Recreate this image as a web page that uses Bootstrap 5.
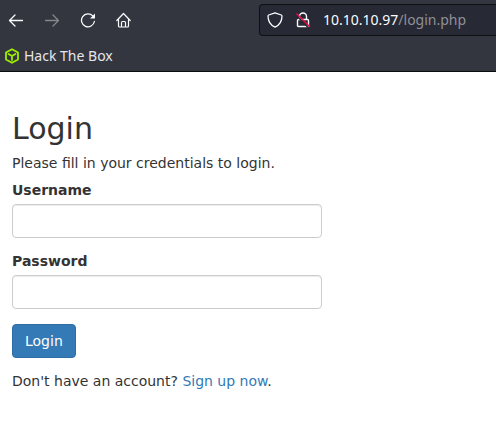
<!DOCTYPE html>
<html lang="en">
<head>
<meta charset="utf-8">
<meta name="viewport" content="width=device-width, initial-scale=1">
<title>Login</title>
<link href="https://cdn.jsdelivr.net/npm/bootstrap@5.3.0/dist/css/bootstrap.min.css" rel="stylesheet">
<style>
  body { font-family: "DejaVu Sans", sans-serif; font-size: 14px; line-height: 20px; color: #333; }
  .browser-bar { background: #33363f; border-bottom: 1px solid #0c0c0d; font-family: "Noto Sans", sans-serif; color: #fbfbfe; }
  .toolbar { display: grid; grid-template-columns: 259px 1fr; height: 40px; }
  .nav-tools { gap: 20px; padding-left: 8px; }
  .tool { width: 16px; height: 16px; color: #fbfbfe; line-height: 0; }
  .tool:disabled { color: #84868b; }
  .address { height: 32px; gap: 12px; padding-left: 7px; background: #272934; border: 1px solid #0f1014; border-right: 0; border-radius: 4px 0 0 4px; font-size: 14px; }
  .address-path { color: #909097; }
  .bookmarks { height: 31px; padding-left: 4px; }
  .bookmark { gap: 4px; font-size: 14px; color: #e6e6ea; }
  svg { display: block; flex: none; fill: none; stroke: currentColor; }
  .brand-cube { color: #9fef00; }
  .login-panel { max-width: 334px; padding: 40px 12px; }
  .login-title { font-size: 30px; line-height: 33px; font-weight: 400; margin-bottom: 8px; }
  .login-intro { margin-bottom: 7px; }
  .login-panel .form-label { font-weight: 700; margin-bottom: 4px; display: block; }
  .field { margin-bottom: 13px; }
  .login-panel .form-control { height: 34px; border-color: #ccc; border-radius: 4px; font-size: 14px; box-shadow: inset 0 1px 1px rgba(0,0,0,.075); }
  .login-panel .btn { --bs-btn-bg: #337ab7; --bs-btn-border-color: #2e6da4; --bs-btn-hover-bg: #286090; --bs-btn-padding-x: 12px; --bs-btn-padding-y: 6px; --bs-btn-font-size: 14px; --bs-btn-line-height: 20px; --bs-btn-border-radius: 4px; }
  .login-actions { margin: 15px 0 13px; }
  .login-panel a { color: #337ab7; }
</style>
<script src="https://cdn.jsdelivr.net/npm/bootstrap@5.3.0/dist/js/bootstrap.bundle.min.js" defer></script>
</head>
<body>
<header class="browser-bar">
  <div class="toolbar align-items-center">
    <div class="nav-tools d-flex align-items-center">
      <button class="tool border-0 bg-transparent p-0" type="button" aria-label="Back"><svg width="16" height="16" viewBox="0 0 16 16" stroke-width="1.3" stroke-linecap="round" stroke-linejoin="round"><path d="M14.500 8.500h-13M7 3 1.500 8.500 7 14"/></svg></button>
      <button class="tool border-0 bg-transparent p-0" type="button" aria-label="Forward" disabled><svg width="16" height="16" viewBox="0 0 16 16" stroke-width="1.3" stroke-linecap="round" stroke-linejoin="round"><path d="M1.500 8.500h13M9 3l5.500 5.500L9 14"/></svg></button>
      <button class="tool border-0 bg-transparent p-0" type="button" aria-label="Reload"><svg width="16" height="16" viewBox="0 0 16 16" stroke-width="1.3" stroke-linecap="round"><path d="M12.800 3.900A6.500 6.500 0 1 0 14.400 9.500"/><path d="M15 1.500V6.500H10z" fill="currentColor" stroke="none"/></svg></button>
      <button class="tool border-0 bg-transparent p-0" type="button" aria-label="Home"><svg width="16" height="16" viewBox="0 0 16 16" stroke-width="1.2" stroke-linecap="round" stroke-linejoin="round"><path d="M.8 8.500 7.500 1.500l6.700 7M2.500 7.500v6.500q0 1 1 1h8q1 0 1-1V7.500M5.500 14.800v-4.300q0-1 1-1h2q1 0 1 1v4.300"/></svg></button>
    </div>
    <div class="address d-flex align-items-center text-nowrap overflow-hidden">
      <svg width="16" height="16" viewBox="0 0 16 16" stroke-width="1.3" stroke-linejoin="round"><path d="M8 .8 14.300 3q.7.300.7 1c0 5-2.300 9-7 11.200C3.300 13 1 9 1 4q0-.7.7-1z"/></svg>
      <svg width="16" height="16" viewBox="0 0 16 16" stroke-width="1.4" stroke-linejoin="round"><path d="M4.500 7.500V4.500a3.500 3.500 0 0 1 7 0v3M3.500 7.500h9q1 0 1 1v5q0 1-1 1h-9q-1 0-1-1v-5q0-1 1-1z"/><path d="M1 3 13.500 16" stroke="#272934" stroke-width="1.500"/><path d="M1.500 1.500 15 15" stroke="#e60c40" stroke-width="1.500"/></svg>
      <span>10.10.10.97<span class="address-path">/login.php</span></span>
    </div>
  </div>
  <nav class="bookmarks d-flex align-items-center" aria-label="Bookmarks">
    <a href="#" class="bookmark d-flex align-items-center text-decoration-none">
      <svg class="brand-cube" width="16" height="16" viewBox="0 0 16 16" stroke-width="1.800" stroke-linejoin="round" stroke-linecap="round"><path d="M8 1.200 14 4.500v7L8 14.800 2 11.500v-7zM4.500 6 8 8l3.500-2M8 8v4"/></svg>
      Hack The Box
    </a>
  </nav>
</header>
<main class="login-panel">
  <h1 class="login-title">Login</h1>
  <p class="login-intro">Please fill in your credentials to login.</p>
  <form>
    <div class="field">
      <label class="form-label" for="username">Username</label>
      <input class="form-control" type="text" id="username" name="username">
    </div>
    <div class="field">
      <label class="form-label" for="password">Password</label>
      <input class="form-control" type="password" id="password" name="password">
    </div>
    <div class="login-actions"><button class="btn btn-primary" type="submit">Login</button></div>
    <p class="mb-0">Don't have an account? <a href="#" class="text-decoration-none">Sign up now</a>.</p>
  </form>
</main>
</body>
</html>
